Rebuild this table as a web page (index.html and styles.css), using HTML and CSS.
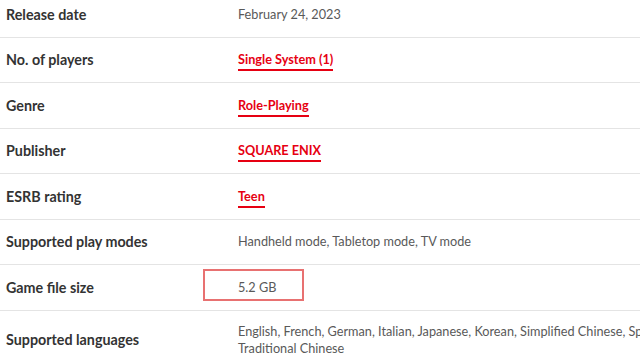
FILE: index.html
```html
<!DOCTYPE HTML><html>
<head>
	<meta name="viewport" charset="UTF-8" content="width=device-width, initial-scale=1">
	<title>Game details</title>
	<link rel="stylesheet" href="styles.css">
</head>
<body>
	<div class="specs">
		<div class="row">
			<div class="label">Release date</div>
			<div class="value">February 24, 2023</div>
		</div>
		<div class="row">
			<div class="label">No. of players</div>
			<div class="value"><a href="#">Single System (1)</a></div>
		</div>
		<div class="row">
			<div class="label">Genre</div>
			<div class="value"><a href="#">Role-Playing</a></div>
		</div>
		<div class="row">
			<div class="label">Publisher</div>
			<div class="value"><a href="#">SQUARE ENIX</a></div>
		</div>
		<div class="row">
			<div class="label">ESRB rating</div>
			<div class="value"><a href="#">Teen</a></div>
		</div>
		<div class="row">
			<div class="label">Supported play modes</div>
			<div class="value">Handheld mode, Tabletop mode, TV mode</div>
		</div>
		<div class="row">
			<div class="label">Game file size</div>
			<div class="value marked"><span class="mark"></span>5.2 GB</div>
		</div>
		<div class="row last">
			<div class="label">Supported languages</div>
			<div class="value">English, French, German, Italian, Japanese, Korean, Simplified Chinese, Spanish,<br>Traditional Chinese</div>
		</div>
	</div>
</body>
</html>
```

FILE: styles.css
```css
html {
	font-family: Lato, "Open Sans", sans-serif;
}
body {
	background-color: #fff;
	margin: 0;
	overflow: hidden;
}
.specs {
	margin-top: -8px;
}
.row {
	display: grid;
	grid-template-columns: 232px 1fr;
	align-items: center;
	height: 44.5px;
	padding-left: 6px;
	border-bottom: 1px solid #e4e4e4;
}
.row.last {
	height: 58px;
	border-bottom: none;
}
.label {
	font-size: 14.3px;
	font-weight: bold;
	color: #333;
}
.value {
	font-size: 12.7px;
	line-height: 17px;
	color: #595959;
	white-space: nowrap;
}
.value a {
	color: #e60012;
	font-weight: bold;
	text-decoration: none;
	border-bottom: 2px solid #e60012;
	padding-bottom: 2px;
}
.marked {
	position: relative;
}
/* highlight box drawn over the file size */
.mark {
	position: absolute;
	left: -35px;
	top: -10px;
	width: 97px;
	height: 28px;
	border: 2px solid #e87171;
}
```
